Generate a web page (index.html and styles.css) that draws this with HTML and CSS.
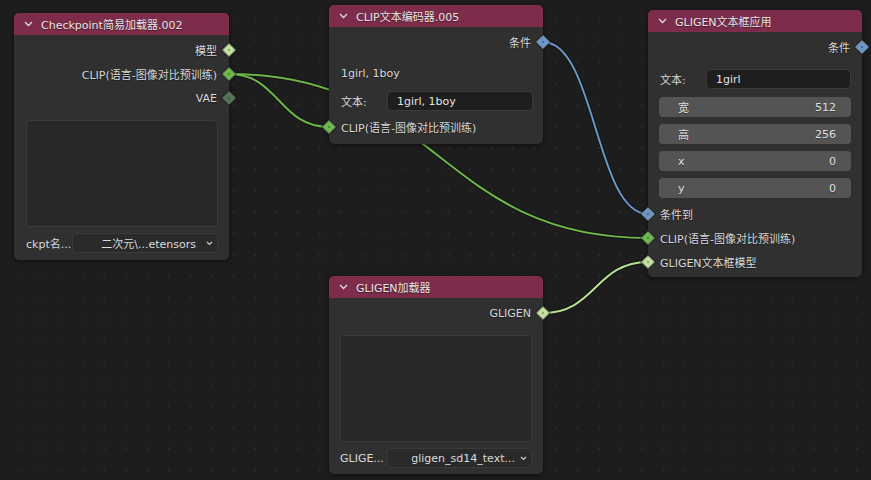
FILE: index.html
```html
<!DOCTYPE html>
<html>
<head>
<meta charset="utf-8">
<link rel="stylesheet" href="styles.css">
</head>
<body>
<div class="canvas">
  <svg class="links" width="871" height="480" viewBox="0 0 871 480">
    <g fill="none" stroke-linecap="round">
      <path class="shadow" d="M229,74 C438.5,74 438.5,238 648,238"/>
      <path class="shadow" d="M229,74 C279,74 279,127 329,127"/>
      <path class="shadow" d="M543,42 C595.5,42 595.5,214 648,214"/>
      <path class="shadow" d="M543,313 C595.5,313 595.5,262 648,262"/>
      <path class="l-clip" d="M229,74 C438.5,74 438.5,238 648,238"/>
      <path class="l-clip" d="M229,74 C279,74 279,127 329,127"/>
      <path class="l-cond" d="M543,42 C595.5,42 595.5,214 648,214"/>
      <path class="l-gligen" d="M543,313 C595.5,313 595.5,262 648,262"/>
    </g>
  </svg>

  <div class="node n1">
    <div class="hdr"><svg class="chev" width="9" height="6" viewBox="0 0 9 6"><polyline points="1,1 4.5,4.5 8,1"/></svg>Checkpoint简易加载器.002</div>
    <div class="body">
      <div class="row out">模型<span class="sock s-model"></span></div>
      <div class="row out">CLIP(语言-图像对比预训练)<span class="sock s-clip"></span></div>
      <div class="row out">VAE<span class="sock s-vae"></span></div>
      <div class="preview p1"></div>
      <div class="prop">
        <span class="plabel">ckpt名...</span>
        <div class="dd"><span class="ddtext">二次元\...etensors</span><svg class="ddchev" width="7" height="5" viewBox="0 0 7 5"><polyline points="1,1 3.5,3.5 6,1"/></svg></div>
      </div>
    </div>
  </div>

  <div class="node n2">
    <div class="hdr"><svg class="chev" width="9" height="6" viewBox="0 0 9 6"><polyline points="1,1 4.5,4.5 8,1"/></svg>CLIP文本编码器.005</div>
    <div class="body">
      <div class="row out">条件<span class="sock s-cond"></span></div>
      <div class="row text1">1girl, 1boy</div>
      <div class="prop">
        <span class="plabel">文本:</span>
        <div class="field">1girl, 1boy</div>
      </div>
      <div class="row in"><span class="sock s-clip"></span>CLIP(语言-图像对比预训练)</div>
    </div>
  </div>

  <div class="node n3">
    <div class="hdr"><svg class="chev" width="9" height="6" viewBox="0 0 9 6"><polyline points="1,1 4.5,4.5 8,1"/></svg>GLIGEN文本框应用</div>
    <div class="body">
      <div class="row out">条件<span class="sock s-cond"></span></div>
      <div class="prop p-text">
        <span class="plabel">文本:</span>
        <div class="field">1girl</div>
      </div>
      <div class="nums">
        <div class="num"><span>宽</span><span>512</span></div>
        <div class="num"><span>高</span><span>256</span></div>
        <div class="num"><span>x</span><span>0</span></div>
        <div class="num"><span>y</span><span>0</span></div>
      </div>
      <div class="row in"><span class="sock s-cond"></span>条件到</div>
      <div class="row in"><span class="sock s-clip"></span>CLIP(语言-图像对比预训练)</div>
      <div class="row in"><span class="sock s-model"></span>GLIGEN文本框模型</div>
    </div>
  </div>

  <div class="node n4">
    <div class="hdr"><svg class="chev" width="9" height="6" viewBox="0 0 9 6"><polyline points="1,1 4.5,4.5 8,1"/></svg>GLIGEN加载器</div>
    <div class="body">
      <div class="row out">GLIGEN<span class="sock s-model"></span></div>
      <div class="preview p4"></div>
      <div class="prop">
        <span class="plabel">GLIGE...</span>
        <div class="dd"><span class="ddtext">gligen_sd14_text...</span><svg class="ddchev" width="7" height="5" viewBox="0 0 7 5"><polyline points="1,1 3.5,3.5 6,1"/></svg></div>
      </div>
    </div>
  </div>
</div>
</body>
</html>
```

FILE: styles.css
```css
* { box-sizing: border-box; }
html, body {
  margin: 0;
  padding: 0;
}
body {
  width: 871px;
  height: 480px;
  overflow: hidden;
  background-color: #1d1d1d;
  background-image: radial-gradient(circle, #2a2a2a 0.9px, transparent 1.3px);
  background-size: 21.5px 21.5px;
  background-position: 7.75px 8px;
  font-family: "DejaVu Sans", "Noto Sans CJK SC", sans-serif;
  font-size: 11px;
  color: #d8d8d8;
}
.canvas {
  position: relative;
  width: 871px;
  height: 480px;
}
.links {
  position: absolute;
  left: 0;
  top: 0;
}
.links .shadow { stroke: rgba(0,0,0,0.35); stroke-width: 4; }
.links .l-clip { stroke: #6db548; stroke-width: 2; }
.links .l-cond { stroke: #6b97c9; stroke-width: 2; }
.links .l-gligen { stroke: #b9e08f; stroke-width: 2; }

.node {
  position: absolute;
  background: #303030;
  border-radius: 5px;
  box-shadow: 0 1px 5px rgba(0,0,0,0.55);
  display: flex;
  flex-direction: column;
}
.n1 { left: 14px; top: 13px; width: 215px; height: 247px; }
.n2 { left: 329px; top: 5px; width: 214px; height: 139px; }
.n3 { left: 648px; top: 10px; width: 214px; height: 267px; }
.n4 { left: 329px; top: 276px; width: 214px; height: 198px; }

.hdr {
  height: 22px;
  flex: none;
  background: #7d2d4b;
  border-radius: 5px 5px 0 0;
  color: #e6e6e6;
  display: flex;
  align-items: center;
  padding-left: 10px;
  text-shadow: 0 1px 1px rgba(0,0,0,0.45);
}
.chev {
  margin-right: 8px;
  fill: none;
  stroke: #dcdcdc;
  stroke-width: 1.3;
}
.body {
  display: flex;
  flex-direction: column;
  padding-top: 3px;
}
.row {
  position: relative;
  height: 24px;
  display: flex;
  align-items: center;
  text-shadow: 0 1px 1px rgba(0,0,0,0.4);
}
.row.out { justify-content: flex-end; padding-right: 12px; }
.row.in { padding-left: 12px; }
.row.text1 { margin-top: 7px; padding-left: 12px; }

.sock {
  position: absolute;
  top: 7px;
  width: 10px;
  height: 10px;
  transform: rotate(45deg);
  border-radius: 1px;
  box-shadow: 0 0 0 1px rgba(20,20,20,0.55);
}
.sock::after {
  content: "";
  position: absolute;
  left: 2.5px;
  top: 2.5px;
  width: 2px;
  height: 2px;
  background: rgba(0,0,0,0.3);
}
.row.out .sock { right: -5px; }
.row.in .sock { left: -5px; }
.s-model { background: #c6e29f; border: 1.5px solid #8e9c84; }
.s-clip { background: #6cbb4b; border: 1.5px solid #6e8a64; }
.s-vae { background: #557657; border: 1.5px solid #5b6a5b; }
.s-cond { background: #6b97cb; border: 1.5px solid #7e8ea0; }

.preview {
  background: #282828;
  border: 1px solid #3b3b3b;
  border-radius: 4px;
  height: 107px;
}
.p1 { margin: 10px 11px 0 12px; }
.p4 { margin: 10px 11px 0 11px; }

.prop {
  display: flex;
  align-items: center;
  height: 20px;
  padding: 0 11px 0 12px;
  margin-top: 6px;
}
.n2 .prop { margin-top: 6px; padding-right: 10px; }
.n4 .prop { padding-left: 11px; }
.plabel {
  width: 46px;
  flex: none;
  white-space: nowrap;
}
.n4 .plabel { width: 47px; }
.field {
  flex: 1;
  height: 20px;
  background: #1e1e1e;
  border: 1px solid #3a3a3a;
  border-radius: 4px;
  padding-left: 9px;
  display: flex;
  align-items: center;
  color: #e2e2e2;
}
.dd {
  flex: 1;
  height: 20px;
  background: #2a2a2a;
  border: 1px solid #3a3a3a;
  border-radius: 4px;
  display: flex;
  align-items: center;
  justify-content: flex-end;
  padding-right: 4px;
  color: #dadada;
}
.ddtext { margin-right: 10px; white-space: nowrap; }
.n4 .ddtext { margin-right: 5px; }
.ddchev { fill: none; stroke: #cfcfcf; stroke-width: 1.2; }

.n2 .row.in { margin-top: 4px; }

.p-text { margin-top: 10px; }
.nums {
  display: flex;
  flex-direction: column;
  gap: 7px;
  margin: 8px 11px 4px 11px;
}
.num {
  height: 20px;
  background: #545454;
  border-radius: 4px;
  display: flex;
  align-items: center;
  justify-content: space-between;
  padding: 0 15px 0 19px;
  color: #e0e0e0;
  text-shadow: 0 1px 1px rgba(0,0,0,0.35);
}
```
